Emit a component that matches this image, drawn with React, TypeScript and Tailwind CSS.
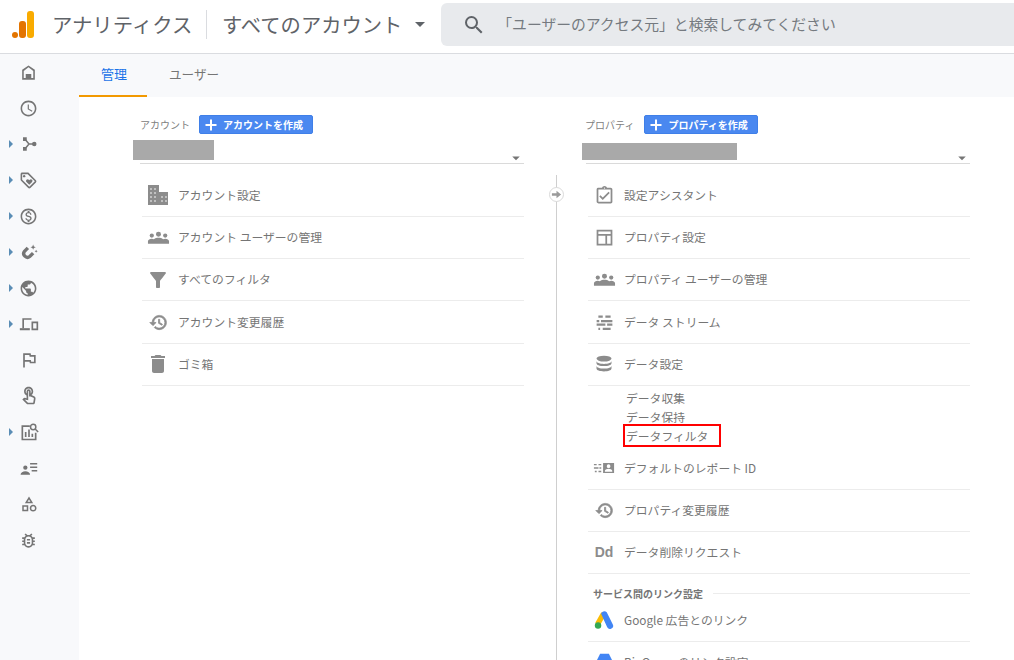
import React from "react";
import {
  MdAccessTime, MdOutlineLoyalty, MdOutlineMonetizationOn, MdPublic, MdOutlineFlag,
  MdOutlineTouchApp, MdOutlineBugReport, MdOutlineCategory, MdFilterAlt, MdDelete,
  MdOutlineAssignmentTurnedIn, MdSearch, MdArrowDropDown,
} from "react-icons/md";

const Svg = ({ children, size = 18 }: { children: React.ReactNode; size?: number }) => (
  <svg width={size} height={size} viewBox="0 0 24 24" fill="currentColor">{children}</svg>
);

const Home = () => (
  <Svg size={19}>
    <path fillRule="evenodd" d="M12 3L4 8.500V21h16V8.500zM12 5.500L6 10v9h2.500v-5h7v5H18v-9z" />
  </Svg>
);
const Acquisition = () => (
  <Svg>
    <path d="M4 3h5v5H4zM4 16h5v5H4z" />
    <circle cx="19" cy="12" r="3" />
    <path d="M7 6l5 6-5 6M12 12h6" fill="none" stroke="currentColor" strokeWidth="2" />
  </Svg>
);
const Magnet = () => (
  <Svg>
    <path d="M10.500 6.500L6 11a5 5 0 0 0 7 7l4.500-4.500" fill="none" stroke="currentColor" strokeWidth="4.500" />
    <path d="M17.500 2l1 2.500 2.500 1-2.500 1-1 2.500-1-2.500-2.500-1 2.500-1zM21.500 9l.6 1.400 1.400.6-1.400.6-.6 1.400-.6-1.400-1.400-.6 1.400-.6z" />
  </Svg>
);
const Devices = () => (
  <Svg size={20}>
    <path d="M4 5h11v2H6v10H4z" />
    <path d="M1 17h12v2.500H1z" />
    <path fillRule="evenodd" d="M15 9h8v10.500h-8zM17 11v6.500h4V11z" />
  </Svg>
);
const Report = () => (
  <Svg size={20}>
    <path d="M3 4h10v2H5v14h14v-7h2v9H3z" />
    <path d="M7 12h2v6H7zM11 9h2v9h-2zM15 14h2v4h-2z" />
    <circle cx="17" cy="6" r="3.200" fill="none" stroke="currentColor" strokeWidth="1.800" />
    <path d="M19.400 8.400L23 12" stroke="currentColor" strokeWidth="1.800" />
  </Svg>
);
const Audience = () => (
  <Svg size={19}>
    <circle cx="8" cy="11" r="2.700" />
    <path d="M2 20c0-3 3-4.500 6-4.500s6 1.500 6 4.500z" />
    <path d="M14 5h9v1.800h-9zM14 9.500h9v1.800h-9zM16 14h7v1.800h-7z" />
  </Svg>
);
const Building = () => (
  <svg width="22" height="22" viewBox="0 0 22 22" fill="currentColor">
    <path d="M1 1h11v20H1z" />
    <path d="M12 8h9v13h-9z" />
    <path fill="#fff" fillOpacity="0.45" d="M3 4h2v2H3zM7 4h2v2H7zM3 8h2v2H3zM7 8h2v2H7zM3 12h2v2H3zM7 12h2v2H7zM3 16h2v2H3zM7 16h2v2H7zM14 12h2v2h-2zM18 12h2v2h-2zM14 16h2v2h-2zM18 16h2v2h-2z" />
  </svg>
);
const Groups = () => (
  <Svg size={23}>
    <circle cx="5" cy="10" r="2.200" />
    <circle cx="12" cy="8.500" r="2.600" />
    <circle cx="19" cy="10" r="2.200" />
    <path d="M1 18.500V16c0-1.700 2-2.700 4-2.700.9 0 1.600.2 2.200.5 1.300-1 3-1.500 4.800-1.500s3.500.5 4.800 1.500c.6-.3 1.300-.5 2.200-.5 2 0 4 1 4 2.700v2.500z" />
  </Svg>
);
const History = () => (
  <Svg size={19}>
    <path
      stroke="currentColor"
      strokeWidth="0.900"
      d="M13 3c-4.970 0-9 4.030-9 9H1l3.890 3.890.07.14L9 12H6c0-3.870 3.130-7 7-7s7 3.130 7 7-3.130 7-7 7c-1.930 0-3.680-.79-4.940-2.060l-1.420 1.420C8.270 19.990 10.510 21 13 21c4.970 0 9-4.030 9-9s-4.030-9-9-9zm-1 5v5l4.250 2.520.77-1.280-3.520-2.090V8z"
    />
  </Svg>
);
const Plus = () => (
  <svg width="16" height="16" viewBox="0 0 16 16" fill="currentColor">
    <path d="M7 2.500h2V7h4.500v2H9v4.500H7V9H2.500V7H7z" />
  </svg>
);
const CircleArrow = () => (
  <svg width="11" height="11" viewBox="0 0 12 12" fill="currentColor">
    <path d="M1 4.700h5V2l5 4-5 4V7.300H1z" />
  </svg>
);
const Stream = () => (
  <Svg size={21}>
    <path d="M5 4h5v2.600H5zM13 4h6v2.600h-6zM3 9h3v2.600H3zM8 9h13v2.600H8zM3 13h10v2.600H3zM15 13h6v2.600h-6zM5 18h2v2.600H5zM10 18h9v2.600h-9z" />
  </Svg>
);
const ReportId = () => (
  <Svg size={22}>
    <path d="M1 7.500h3v1.500H1zM6 7.500h3v1.500H6zM1 11.300h5v1.500H1zM7 11.300h2v1.500H7zM2 15h2v1.500H2zM6 15h3v1.500H6z" />
    <path fillRule="evenodd" d="M11 6.500h12v11H11zM17 8a2 2 0 1 0 0 4 2 2 0 0 0 0-4zM13 16h8v-1c0-1.500-2.500-2.300-4-2.300S13 13.500 13 15z" />
  </Svg>
);
const Layout = () => (
  <Svg size={21}>
    <path fillRule="evenodd" d="M3 3h18v18H3zM5 5v3h14V5zM5 10v9h8v-9zM15 10v9h4v-9z" />
  </Svg>
);
const Database = () => (
  <Svg size={20}>
    <ellipse cx="12" cy="5.500" rx="9" ry="3.500" />
    <path d="M3 8.500v2.500c0 2 4 3.500 9 3.500s9-1.500 9-3.500V8.500c0 2-4 3.500-9 3.500S3 10.500 3 8.500z" />
    <path d="M3 14v3.500c0 2 4 3.500 9 3.500s9-1.500 9-3.500V14c0 2-4 3.500-9 3.500S3 16 3 14z" />
  </Svg>
);
const AdsLogo = () => (
  <svg width="22" height="22" viewBox="0 0 24 24">
    <path d="M9 3.500L2.500 15l5 3L14 6.500z" fill="#fbbc04" />
    <path d="M15 3.500c-2-1.800-5.500-1-6.200 1.800L15.500 20a3.400 3.400 0 0 0 6-3.300z" fill="#4285f4" />
    <circle cx="5.500" cy="18" r="3.500" fill="#34a853" />
  </svg>
);
const BigQuery = () => (
  <svg width="21" height="21" viewBox="0 0 24 24">
    <path d="M7 2h10l5 10-5 10H7L2 12z" fill="#4285f4" />
  </svg>
);

const SideIcon = ({ icon, arrow }: { icon: React.ReactNode; arrow?: boolean }) => (
  <div className="relative flex h-9 w-full items-center justify-center text-[#757575]">
    <div className="ml-[-1px] flex h-5 w-5 items-center justify-center">{icon}</div>
    {arrow && <div className="absolute left-[9px] top-[14px] h-0 w-0 border-y-[4px] border-l-[4px] border-y-transparent border-l-[#5a8db5]" />}
  </div>
);

const Row = ({ icon, text }: { icon: React.ReactNode; text: string }) => (
  <div className="flex h-[42.3px] items-center border-b border-[#ececec]">
    <div className="flex w-[32px] justify-center text-[#8c8c8c]">{icon}</div>
    <span className="mb-[1px] ml-[4px] text-[11.8px] text-[#757575]">{text}</span>
  </div>
);

const ColHead = ({ label, btn, blockW, blockH, blockLeft, lineLeft, btnMl }: { label: string; btn: string; blockW: string; blockH: string; blockLeft: string; lineLeft: string; btnMl: string }) => (
  <div>
    <div className={`flex h-[19px] items-center ${lineLeft === "a" ? "pl-[7px]" : "pl-[3px]"}`}>
      <span className="text-[10px] text-[#808080]">{label}</span>
      <div className={`${btnMl} flex h-[19px] w-[114px] items-center rounded-[2px] border border-[#3f7fe8] bg-[#4a88f0] pl-[3px] text-white`}>
        <Plus />
        <span className="ml-[4px] text-[10px] font-bold">{btn}</span>
      </div>
    </div>
    <div className={`relative flex h-[30px] items-end border-b border-[#dadada] ${lineLeft === "a" ? "ml-[7px]" : "ml-[4px]"}`}>
      <div className={`${blockW} ${blockH} ${blockLeft} mb-[3px] bg-[#a9a9a9]`} />
      <MdArrowDropDown size={18} className="absolute right-[-1px] top-[15px] text-[#757575]" />
    </div>
  </div>
);

const Sub = ({ children }: { children: React.ReactNode }) => (
  <div className="flex h-[19px] items-center pl-[38px] text-[11.8px] text-[#757575]">{children}</div>
);

export default function App() {
  return (
    <div className="flex h-[660px] w-[1014px] flex-col overflow-hidden bg-white" style={{ fontFamily: '"Noto Sans CJK JP", "Noto Sans", sans-serif' }}>
      <header className="flex h-[54px] shrink-0 items-start border-b border-[#dadce0]">
        <div className="ml-[12px] mt-[11px] flex h-[27px] w-[23px] items-end gap-[1px]">
          <div className="h-[6px] w-[6px] rounded-full bg-[#e37400]" />
          <div className="h-[17px] w-[7px] rounded-[3px] bg-[#e37400]" />
          <div className="h-[27px] w-[7px] rounded-[3px] bg-[#f9ab00]" />
        </div>
        <div className="ml-[17px] mt-[10px] h-[29px] w-[155px] border-r border-[#dadce0] text-[20.4px] leading-[29px] text-[#5f6368]">アナリティクス</div>
        <div className="ml-[15px] mt-[10px] text-[20.3px] leading-[29px] text-[#5f6368]">すべてのアカウント</div>
        <MdArrowDropDown size={24} className="ml-[6px] mt-[12px] text-[#5f6368]" />
        <div className="ml-[9px] mt-[3px] flex h-[43px] flex-1 items-center rounded-l-[6px] bg-[#e8eaed] pl-[21px] text-[#5f6368]">
          <MdSearch size={24} />
          <span className="ml-[11px] text-[14.8px] text-[#757a80]">「ユーザーのアクセス元」と検索してみてください</span>
        </div>
      </header>
      <div className="flex min-h-0 flex-1">
        <aside className="w-[79px] shrink-0 bg-[#f8f9fb]">
          <div className="flex w-[58px] flex-col">
            <SideIcon icon={<Home />} />
            <SideIcon icon={<MdAccessTime size={19} />} />
            <SideIcon arrow icon={<Acquisition />} />
            <SideIcon arrow icon={<MdOutlineLoyalty size={19} />} />
            <SideIcon arrow icon={<MdOutlineMonetizationOn size={19} />} />
            <SideIcon arrow icon={<Magnet />} />
            <SideIcon arrow icon={<MdPublic size={19} />} />
            <SideIcon arrow icon={<Devices />} />
            <SideIcon icon={<MdOutlineFlag size={20} />} />
            <SideIcon icon={<MdOutlineTouchApp size={20} />} />
            <SideIcon arrow icon={<Report />} />
            <SideIcon icon={<Audience />} />
            <SideIcon icon={<MdOutlineCategory size={18} />} />
            <SideIcon icon={<MdOutlineBugReport size={19} />} />
          </div>
        </aside>
        <main className="flex min-w-0 flex-1 flex-col">
          <div className="flex h-[43px] shrink-0 bg-[#f8f9fb]">
            <div className="flex h-[43px] w-[68px] items-center justify-center border-b-2 border-[#f29900] pb-[2px] pl-[2px] text-[13px] text-[#1a73e8]">管理</div>
            <div className="ml-[22px] flex h-[41px] items-center text-[12.6px] text-[#757575]">ユーザー</div>
          </div>
          <div className="flex min-h-0 flex-1 overflow-hidden pl-[54px] pt-[18px]">
            <section className="w-[391px] shrink-0">
              <ColHead label="アカウント" btn="アカウントを作成" blockW="w-[81px]" blockH="h-[20px]" blockLeft="ml-[-7px]" lineLeft="a" btnMl="ml-[9px]" />
              <div className="ml-[9px] mt-[10.500px]">
                <Row icon={<Building />} text="アカウント設定" />
                <Row icon={<Groups />} text="アカウント ユーザーの管理" />
                <Row icon={<MdFilterAlt size={24} />} text="すべてのフィルタ" />
                <Row icon={<History />} text="アカウント変更履歴" />
                <Row icon={<MdDelete size={24} />} text="ゴミ箱" />
              </div>
            </section>
            <div className="relative w-[58px] shrink-0">
              <div className="absolute bottom-0 left-[32px] top-[60px] w-px bg-[#cfcfcf]" />
              <div className="absolute left-[25px] top-[72px] flex h-[15px] w-[15px] items-center justify-center rounded-full border border-[#dadada] bg-white text-[#9a9a9a]">
                <CircleArrow />
              </div>
            </div>
            <section className="w-[388px] shrink-0">
              <ColHead label="プロパティ" btn="プロパティを作成" blockW="w-[155px]" blockH="h-[17px]" blockLeft="ml-[-4px]" lineLeft="b" btnMl="ml-[10px]" />
              <div className="ml-[6px] mt-[10.500px]">
                <Row icon={<MdOutlineAssignmentTurnedIn size={21} />} text="設定アシスタント" />
                <Row icon={<Layout />} text="プロパティ設定" />
                <Row icon={<Groups />} text="プロパティ ユーザーの管理" />
                <Row icon={<Stream />} text="データ ストリーム" />
                <Row icon={<Database />} text="データ設定" />
                <div className="pt-[2px]">
                  <Sub>データ収集</Sub>
                  <Sub>データ保持</Sub>
                  <div className="ml-[35px] mt-[-1.500px] flex h-[23px] w-[98px] items-center border-2 border-[#ff0000] pl-[1px] text-[11.8px] text-[#757575]">データフィルタ</div>
                </div>
                <Row icon={<ReportId />} text="デフォルトのレポート ID" />
                <Row icon={<History />} text="プロパティ変更履歴" />
                <Row icon={<span className="text-[14px] font-bold" style={{ fontFamily: '"Liberation Sans", sans-serif' }}>Dd</span>} text="データ削除リクエスト" />
                <div className="mb-[-3px] mt-[11px] flex h-[17px] items-center pl-[5px]">
                  <span className="text-[10px] font-bold text-[#757575]">サービス間のリンク設定</span>
                  <div className="ml-[10px] h-px flex-1 bg-[#ececec]" />
                </div>
                <Row icon={<AdsLogo />} text="Google 広告とのリンク" />
                <Row icon={<BigQuery />} text="BigQuery のリンク設定" />
              </div>
            </section>
          </div>
        </main>
      </div>
    </div>
  );
}
